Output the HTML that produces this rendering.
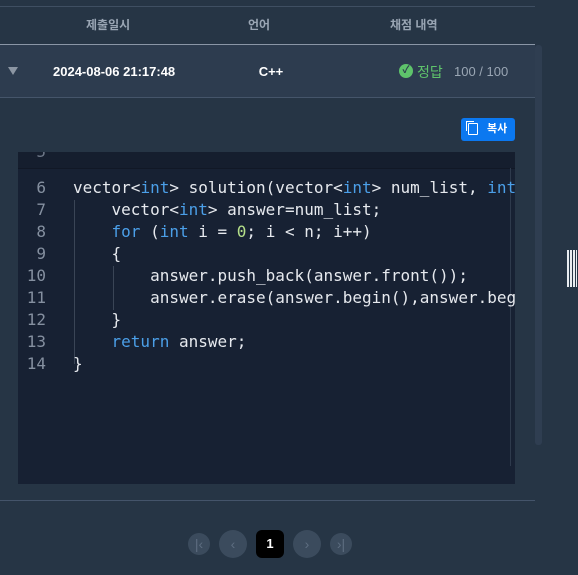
<html><head><style>
body{margin:0;width:578px;height:575px;background:#263545;font-family:"Liberation Sans","Noto Sans CJK KR",sans-serif;position:relative;overflow:hidden}
.a{position:absolute}
.code{font-family:"DejaVu Sans Mono","Liberation Mono",monospace;font-size:16px;color:#e6e9ee;white-space:pre;line-height:22px}
.k{color:#4b9fe8}.n{color:#b5e08a}
.ln{color:#8590a0;text-align:right;width:28px}
.pb{border-radius:50%;background:#3b4b5d;color:#5d6d80;text-align:center;font-size:14px}
</style></head><body>
<div class="a" style="left:0;top:6px;width:535px;height:1px;background:#3f4f62"></div>
<div class="a" style="left:0;top:16px;width:535px;height:22px;font-size:12px;color:#9aa6b4;font-weight:bold">
<span class="a" style="left:86px">제출일시</span><span class="a" style="left:248px">언어</span><span class="a" style="left:390px">채점 내역</span></div>
<div class="a" style="left:0;top:44px;width:535px;height:1px;background:#8a96a6"></div>
<div class="a" style="left:0;top:45px;width:535px;height:52px;background:#2d3c4f;border-bottom:1px solid #45556a"></div>
<div class="a" style="left:8px;top:67px;width:0;height:0;border-left:5px solid transparent;border-right:5px solid transparent;border-top:8px solid #8c96a3"></div>
<div class="a" style="left:53px;top:64px;font-size:13px;font-weight:bold;color:#fff">2024-08-06 21:17:48</div>
<div class="a" style="left:246px;top:64px;font-size:13px;font-weight:bold;color:#fff;width:50px;text-align:center">C++</div>
<div class="a" style="left:399px;top:64px;width:14px;height:14px;border-radius:50%;background:#5ec36b;color:#2d3c4f;font-size:10px;text-align:center;line-height:14px;font-weight:bold">✓</div>
<div class="a" style="left:417px;top:62px;font-size:14px;color:#5ec36b">정답</div>
<div class="a" style="left:454px;top:64px;font-size:13px;color:#9aa6b4">100 / 100</div>
<div class="a" style="left:461px;top:118px;width:54px;height:23px;border-radius:3px;background:#0b78f0;color:#fff;font-size:11px;font-weight:bold;line-height:23px">
<span class="a" style="left:7px;top:5px;width:8px;height:10px;border:1.5px solid #fff;border-radius:1px"></span><span class="a" style="left:5px;top:3px;width:7px;height:9px;border-left:1.5px solid #fff;border-top:1.5px solid #fff"></span><span class="a" style="left:26px">복사</span></div>
<div class="a" style="left:18px;top:152px;width:497px;height:332px;background:#172133"></div>
<div class="a" style="left:18px;top:152px;width:497px;height:16px;background:#151e2e;overflow:hidden;border-bottom:1px solid #111826"><span class="a code ln" style="left:0;top:-11px;color:#6c7686">5</span></div>
<div class="a" style="left:510px;top:168px;width:1px;height:298px;background:#2e3a4c"></div>
<div class="a" style="left:74px;top:200px;width:1px;height:164px;background:#3a4556"></div>
<div class="a" style="left:113px;top:266px;width:1px;height:44px;background:#3a4556"></div>
<div class="a code ln" style="left:18px;top:177px">6
7
8
9
10
11
12
13
14</div>
<div class="a code" style="left:73px;top:177px;width:442px;overflow:hidden">vector&lt;<span class="k">int</span>&gt; solution(vector&lt;<span class="k">int</span>&gt; num_list, <span class="k">int</span>
    vector&lt;<span class="k">int</span>&gt; answer=num_list;
    <span class="k">for</span> (<span class="k">int</span> i = <span class="n">0</span>; i &lt; n; i++)
    {
        answer.push_back(answer.front());
        answer.erase(answer.begin(),answer.beg
    }
    <span class="k">return</span> answer;
}</div>
<div class="a" style="left:535px;top:45px;width:7px;height:400px;border-radius:3px;background:#2f3e51"></div>
<div class="a" style="left:567px;top:250px;width:10px;height:37px;background:repeating-linear-gradient(90deg,#e8ecf0 0 2px,transparent 2px 3px)"></div>
<div class="a" style="left:0;top:500px;width:535px;height:1px;background:#44546a"></div>
<div class="a pb" style="left:188px;top:533px;width:22px;height:22px;line-height:22px">|‹</div>
<div class="a pb" style="left:219px;top:530px;width:28px;height:28px;line-height:28px">‹</div>
<div class="a" style="left:256px;top:530px;width:28px;height:28px;border-radius:6px;background:#000;color:#fff;font-weight:bold;font-size:13px;text-align:center;line-height:28px">1</div>
<div class="a pb" style="left:293px;top:530px;width:28px;height:28px;line-height:28px">›</div>
<div class="a pb" style="left:330px;top:533px;width:22px;height:22px;line-height:22px">›|</div>
</body></html>
